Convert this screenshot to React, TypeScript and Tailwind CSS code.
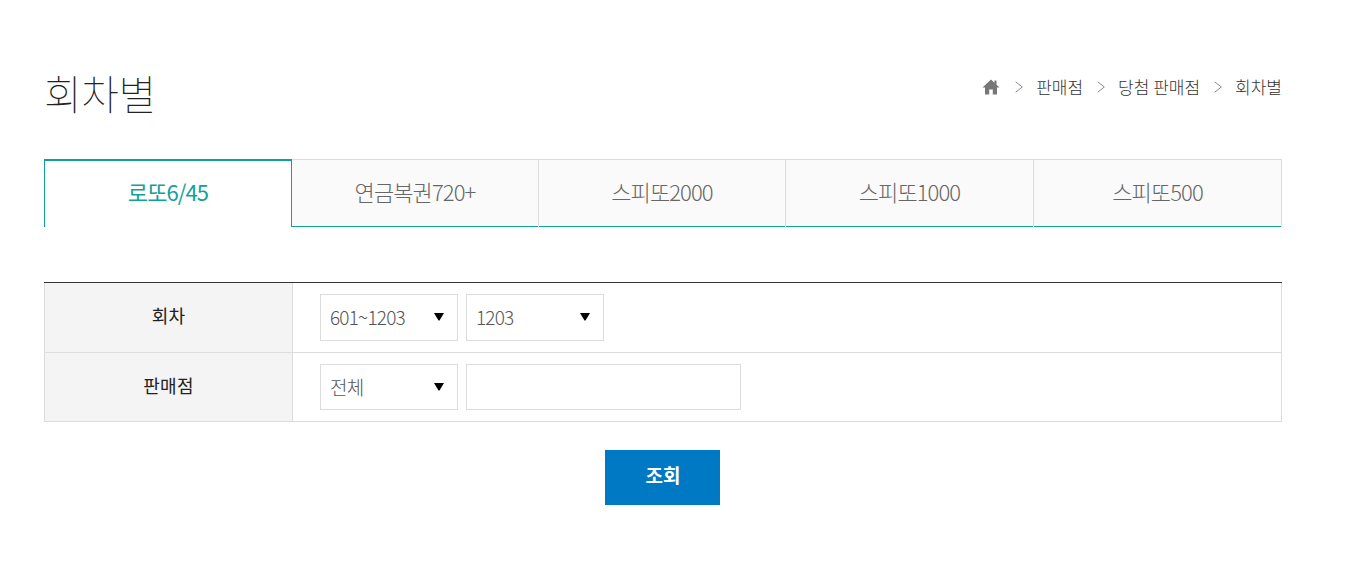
import React from "react";

const FONT = "font-['Noto_Sans_CJK_KR','Noto_Sans_CJK_JP',sans-serif]";

function Chevron() {
  return (
    <svg width="8" height="12" viewBox="0 0 8 12" className="mx-[13.5px]" fill="none">
      <path d="M0.7 0.8L7.3 6L0.7 11.2" stroke="#8a8a8a" strokeWidth="1" />
    </svg>
  );
}

function Sel({ value, h }: { value: string; h: string }) {
  return (
    <div className={`relative w-[138px] ${h} border border-[#dcdcdc] flex items-center pl-[9px] text-[19px] font-light tracking-[-0.8px] text-[#555] bg-white`}>
      <span>{value}</span>
      <svg width="10" height="8" viewBox="0 0 10 8" className="absolute right-[13px] top-[18px]">
        <path d="M0 0H10L5.5 7.5H4.5Z" fill="#000" />
      </svg>
    </div>
  );
}

const tabs = [
  { t: "연금복권720+", w: "w-[247px]" },
  { t: "스피또2000", w: "w-[247px]" },
  { t: "스피또1000", w: "w-[248px]" },
  { t: "스피또500", w: "w-[248px]" },
];

export default function App() {
  return (
    <div className={`${FONT} h-[575px] overflow-hidden bg-white pt-[63px] pl-[44px]`}>
      <div className="w-[1238px]">
        <div className="flex items-center justify-between h-[60px]">
          <h1 className="text-[41px] font-thin tracking-[-0.5px] text-[#222] leading-[58px] pb-[2px]">회차별</h1>
          <nav className="flex items-center text-[17px] font-light text-[#333] relative -top-[6px]">
            <svg width="18" height="16" viewBox="0 0 18 16" className="mr-[1px]">
              <path d="M9 0.5L0.5 8.5H3V15.5H7.2V10.5H10.8V15.5H15V8.5H17.5L14.5 5.7V1.5H12.5V3.8L9 0.5Z" fill="#777" />
            </svg>
            <Chevron />
            <span>판매점</span>
            <Chevron />
            <span>당첨 판매점</span>
            <Chevron />
            <span>회차별</span>
          </nav>
        </div>

        <div className="flex h-[68px] mt-[36px] text-[22px] font-light tracking-[-0.9px]">
          <div className="w-[248px] border-t-2 border-x border-[#12a19a] bg-white text-[#12a19a] font-normal flex items-center justify-center pb-[5px]">
            로또6/45
          </div>
          {tabs.map(({ t, w }) => (
            <div
              key={t}
              className={`${w} border-t border-r border-[#dcdcdc] bg-[#fafafa] text-[#666] flex items-center justify-center pb-[4px] shadow-[inset_0_-1px_0_#12a19a]`}
            >
              {t}
            </div>
          ))}
        </div>

        <div className="mt-[55px] border-t border-[#333]">
          <div className="flex h-[70px] border-x border-b border-[#dcdcdc]">
            <div className="w-[248px] shrink-0 bg-[#f4f4f4] border-r border-[#dcdcdc] flex items-center justify-center text-[18px] tracking-[0.3px] text-[#222] pb-[4px]">
              회차
            </div>
            <div className="flex gap-2 pl-[27px] pt-[11px]">
              <Sel value="601~1203" h="h-[47px]" />
              <Sel value="1203" h="h-[47px]" />
            </div>
          </div>
          <div className="flex h-[69px] border-x border-b border-[#dcdcdc]">
            <div className="w-[248px] shrink-0 bg-[#f4f4f4] border-r border-[#dcdcdc] flex items-center justify-center text-[18px] tracking-[0.3px] text-[#222] pb-[3px]">
              판매점
            </div>
            <div className="flex gap-2 pl-[27px] pt-[11px]">
              <Sel value="전체" h="h-[46px]" />
              <input className="w-[275px] h-[46px] border border-[#dcdcdc] bg-white outline-none" />
            </div>
          </div>
        </div>

        <div className="flex justify-center mt-[28px]">
          <button className="w-[115px] h-[55px] bg-[#0079c4] text-white text-[19px] font-bold pb-[4px] pl-[1px] ml-[-1px]">
            조회
          </button>
        </div>
      </div>
    </div>
  );
}
